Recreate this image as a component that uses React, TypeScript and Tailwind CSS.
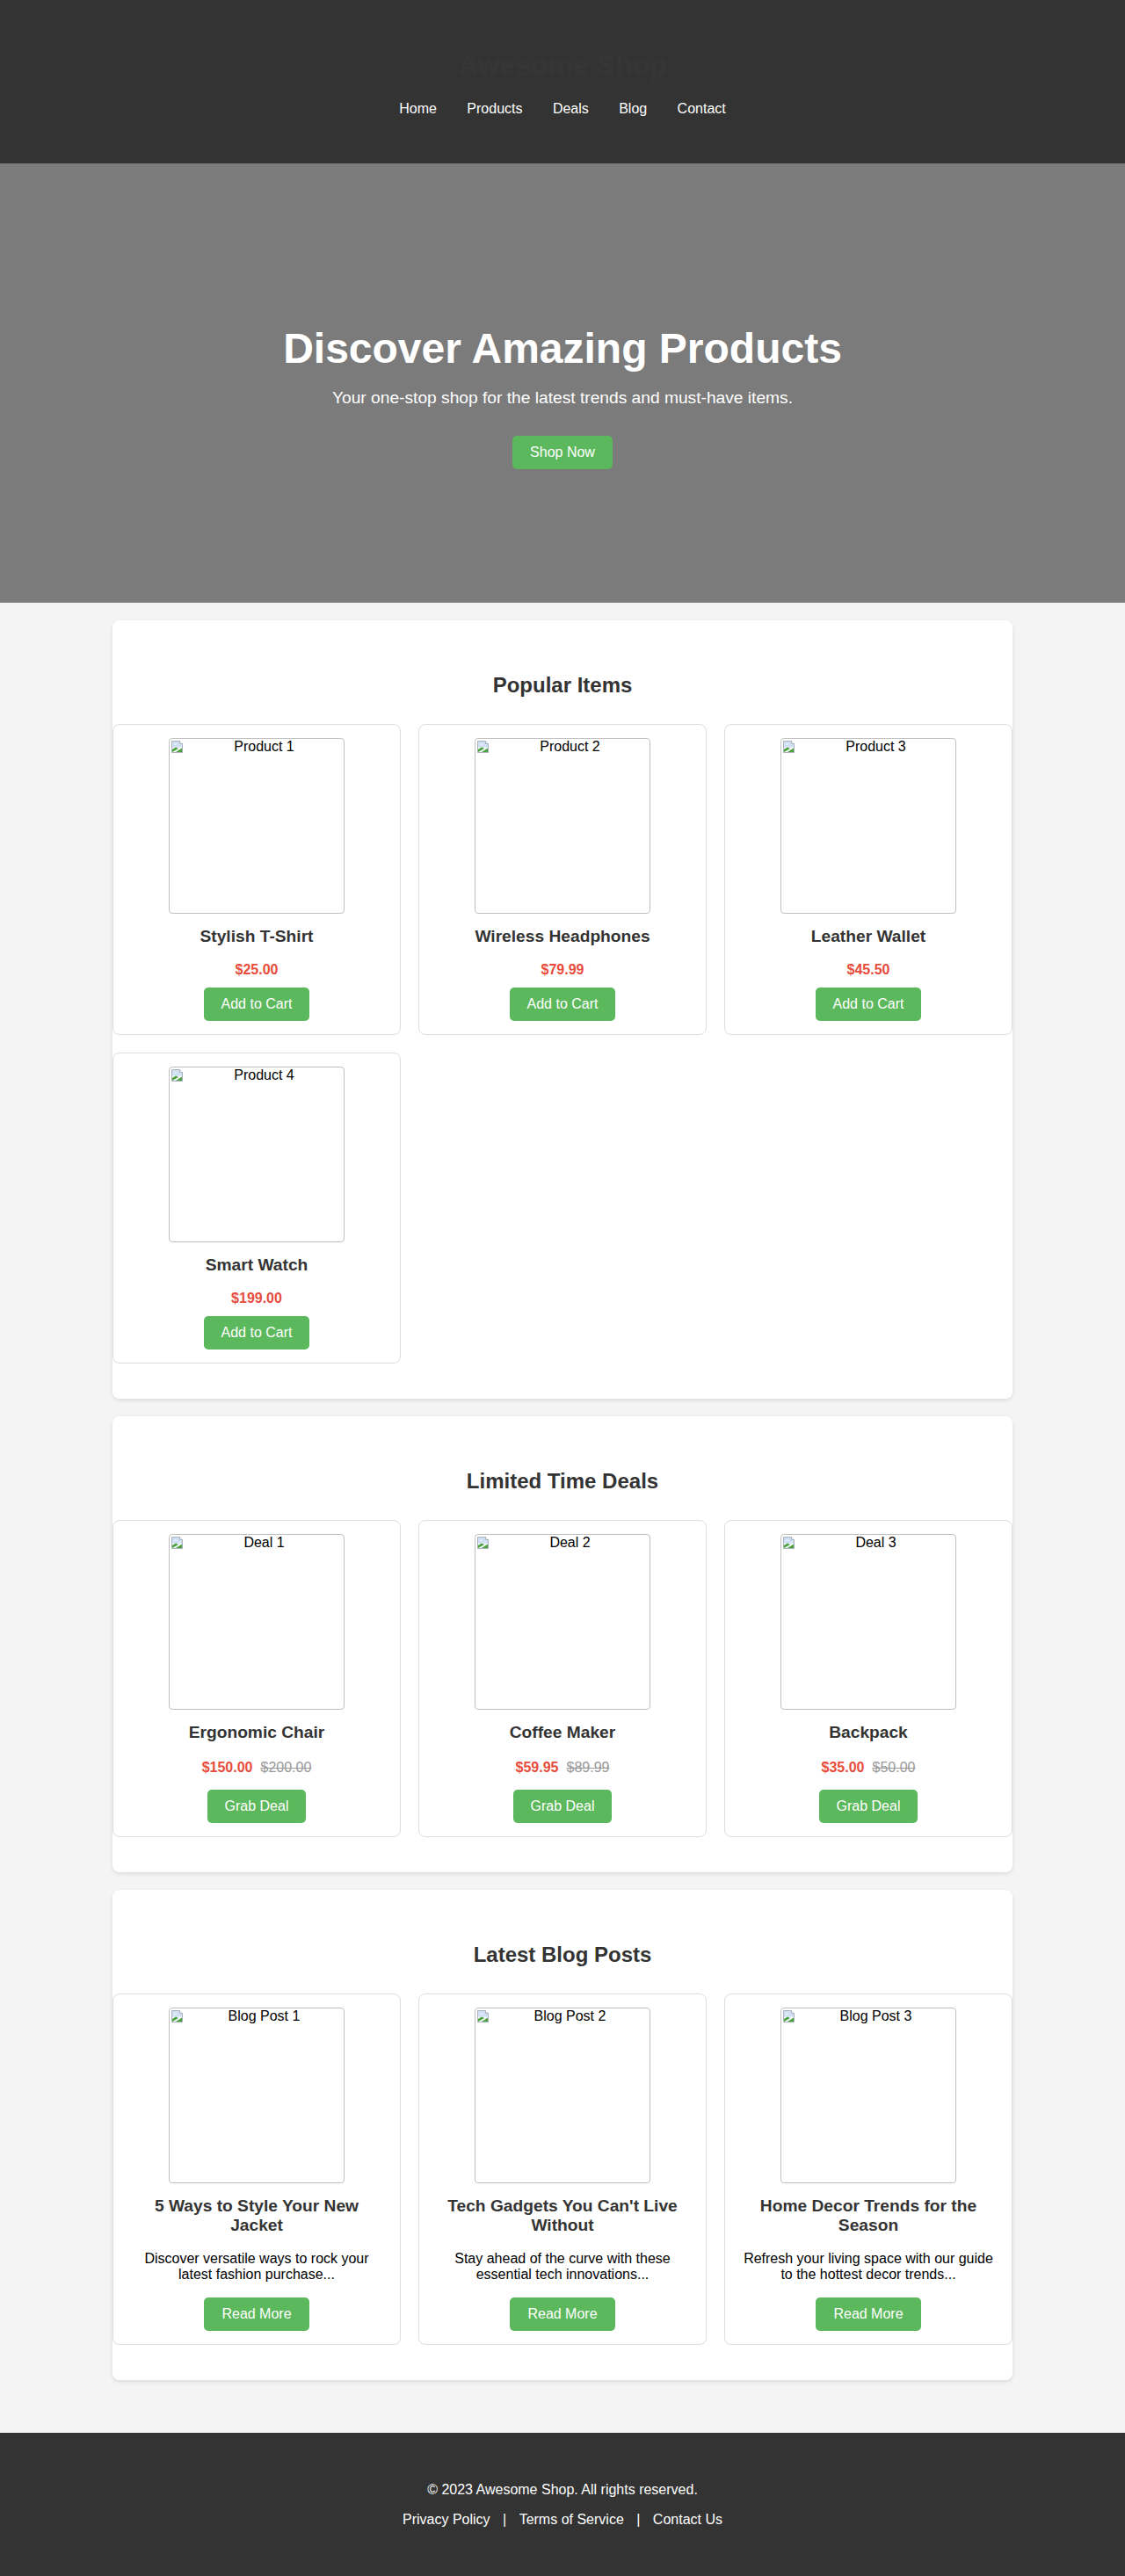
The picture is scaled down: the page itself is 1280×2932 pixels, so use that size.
import React from "react";

interface Product {
  alt: string;
  name: string;
  price: string;
}

interface Deal {
  alt: string;
  name: string;
  price: string;
  oldPrice: string;
}

interface Post {
  alt: string;
  title: string;
  excerpt: string;
}

const products: Product[] = [
  { alt: "Product 1", name: "Stylish T-Shirt", price: "$25.00" },
  { alt: "Product 2", name: "Wireless Headphones", price: "$79.99" },
  { alt: "Product 3", name: "Leather Wallet", price: "$45.50" },
  { alt: "Product 4", name: "Smart Watch", price: "$199.00" },
];

const deals: Deal[] = [
  { alt: "Deal 1", name: "Ergonomic Chair", price: "$150.00", oldPrice: "$200.00" },
  { alt: "Deal 2", name: "Coffee Maker", price: "$59.95", oldPrice: "$89.99" },
  { alt: "Deal 3", name: "Backpack", price: "$35.00", oldPrice: "$50.00" },
];

const posts: Post[] = [
  {
    alt: "Blog Post 1",
    title: "5 Ways to Style Your New Jacket",
    excerpt: "Discover versatile ways to rock your latest fashion purchase...",
  },
  {
    alt: "Blog Post 2",
    title: "Tech Gadgets You Can't Live Without",
    excerpt: "Stay ahead of the curve with these essential tech innovations...",
  },
  {
    alt: "Blog Post 3",
    title: "Home Decor Trends for the Season",
    excerpt: "Refresh your living space with our guide to the hottest decor trends...",
  },
];

const navLinks = ["Home", "Products", "Deals", "Blog", "Contact"];

// chrome-style broken image placeholder (the images never load)
function BrokenImage({ alt }: { alt: string }) {
  return (
    <div className="flex h-[200px] w-[200px] shrink-0 rounded-[4px] border border-[#c0c0c0] text-black">
      <svg className="ml-[1px] mt-[1px] shrink-0" width="16" height="16" viewBox="0 0 16 16">
        <path d="M1.5 1.5h9l3 3v10h-12z" fill="#f4f7fb" stroke="#a9b1bb" />
        <path d="M10.5 1.5v3h3" fill="#fff" stroke="#a9b1bb" />
        <path d="M2 2h8v3h3v3.5L2 8.5z" fill="#cfe0f4" />
        <path d="M4 5.5a1.5 1 0 0 1 3 0z" fill="#fff" />
        <path d="M2 14V11l4-2.5 3 1.5L2 14z" fill="#4aa23c" />
        <path d="M6 14l7-4.5V14z" fill="#4aa23c" />
      </svg>
      <div className="flex-1 text-center text-base leading-[18px]">{alt}</div>
    </div>
  );
}

function GreenButton({ label, className }: { label: string; className?: string }) {
  return (
    <button
      type="button"
      className={
        "cursor-pointer rounded-[5px] bg-[#5cb85c] px-5 py-2.5 text-base leading-[18px] text-white " +
        (className || "")
      }
    >
      {label}
    </button>
  );
}

function Section({ title, children }: { title: string; children: React.ReactNode }) {
  return (
    <section className="w-[1024px] rounded-lg bg-white py-10 shadow-[0_2px_5px_rgba(0,0,0,0.1)]">
      <h2 className="mb-[30px] mt-5 text-center text-2xl font-bold leading-[28px] text-[#333]">{title}</h2>
      <div className="grid grid-cols-3 gap-5">{children}</div>
    </section>
  );
}

function Card({ children }: { children: React.ReactNode }) {
  return (
    <div className="flex flex-col items-center rounded-lg border border-[#ddd] p-[15px] text-center">
      {children}
    </div>
  );
}

export default function App() {
  return (
    <div className="min-h-screen bg-[#f4f4f4] font-['Liberation_Sans',Arial,sans-serif] text-black">
      <header className="h-[186px] bg-[#333] pt-[56px] text-center">
        <div className="text-[32px] font-bold leading-[37px] text-[#363636]">Awesome Shop</div>
        <nav className="mt-[22px] flex justify-center gap-[34.4px] text-base leading-[18px] text-white">
          {navLinks.map((link) => (
            <a key={link} href="#">
              {link}
            </a>
          ))}
        </nav>
      </header>

      <section className="h-[500px] bg-[#7b7b7b] pt-[183px] text-center text-white">
        <h1 className="text-[48px] font-bold leading-[55px]">Discover Amazing Products</h1>
        <p className="mt-[18px] text-[19.2px] leading-[22px]">
          Your one-stop shop for the latest trends and must-have items.
        </p>
        <div className="mt-8 flex justify-center">
          <GreenButton label="Shop Now" />
        </div>
      </section>

      <main className="flex flex-col items-center gap-5 pb-[60px] pt-5">
        <Section title="Popular Items">
          {products.map((p) => (
            <Card key={p.alt}>
              <BrokenImage alt={p.alt} />
              <h3 className="mt-[15px] text-[19.2px] font-bold leading-[22px] text-[#333]">{p.name}</h3>
              <p className="mt-[18px] text-base font-bold leading-[18px] text-[#e74c3c]">{p.price}</p>
              <GreenButton label="Add to Cart" className="mt-[11px]" />
            </Card>
          ))}
        </Section>

        <Section title="Limited Time Deals">
          {deals.map((d) => (
            <Card key={d.alt}>
              <BrokenImage alt={d.alt} />
              <h3 className="mt-[15px] text-[19.2px] font-bold leading-[22px] text-[#333]">{d.name}</h3>
              <div className="mt-5 flex items-baseline justify-center gap-[9px] text-base leading-[18px]">
                <span className="font-bold text-[#e74c3c]">{d.price}</span>
                <span className="text-[#999] line-through">{d.oldPrice}</span>
              </div>
              <GreenButton label="Grab Deal" className="mt-4" />
            </Card>
          ))}
        </Section>

        <Section title="Latest Blog Posts">
          {posts.map((post) => (
            <Card key={post.alt}>
              <BrokenImage alt={post.alt} />
              <h3 className="mt-[15px] text-[19.2px] font-bold leading-[22px] text-[#333]">{post.title}</h3>
              <p className="mt-[18px] text-base leading-[18px]">{post.excerpt}</p>
              <GreenButton label="Read More" className="mt-[17px]" />
            </Card>
          ))}
        </Section>
      </main>

      <footer className="bg-[#333] py-10 text-center text-base leading-[18px] text-white">
        <p className="mt-4">&copy; 2023 Awesome Shop. All rights reserved.</p>
        <p className="my-4">
          <a href="#" className="mx-2.5">Privacy Policy</a> | <a href="#" className="mx-2.5">Terms of Service</a> |{" "}
          <a href="#" className="mx-2.5">Contact Us</a>
        </p>
      </footer>
    </div>
  );
}
